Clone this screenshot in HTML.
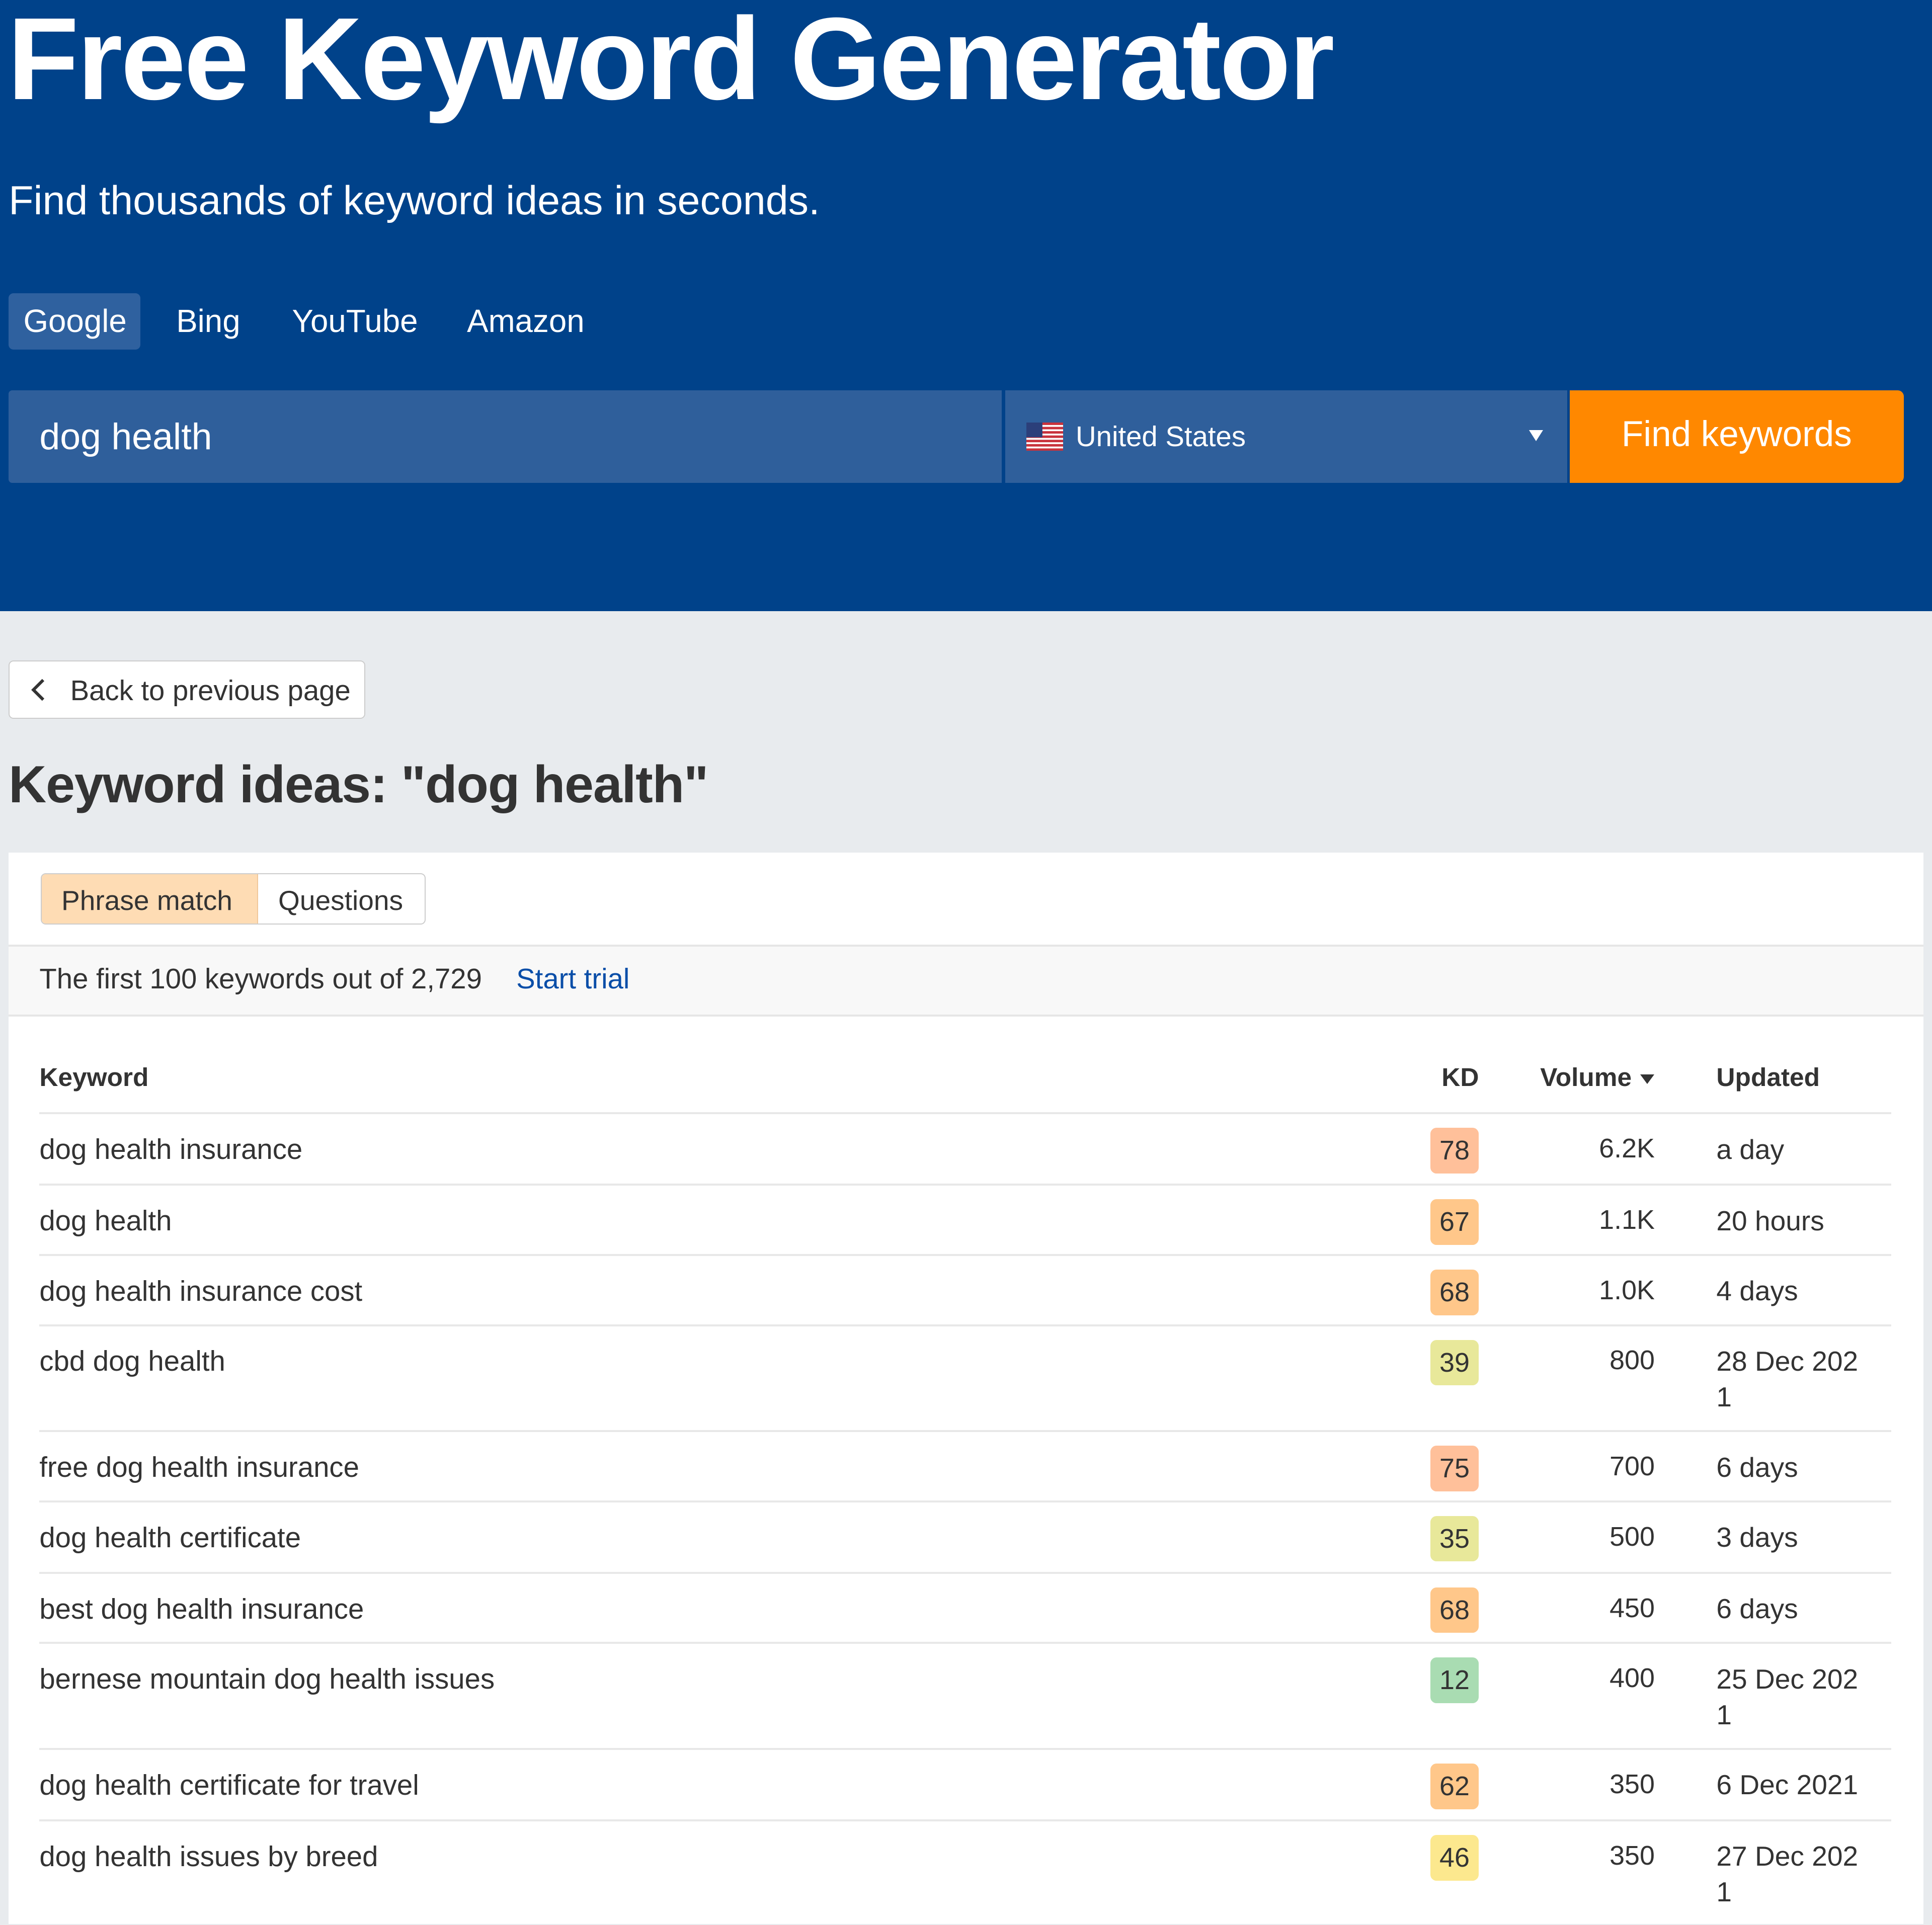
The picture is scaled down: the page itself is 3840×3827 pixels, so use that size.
<!DOCTYPE html>
<html><head><meta charset="utf-8">
<style>
html,body{margin:0;padding:0;}
body{width:3840px;height:3824px;overflow:hidden;background:#e8ebee;}
#z{zoom:2.44898;position:relative;width:1568px;height:1562px;font-family:"Liberation Sans",Arial,sans-serif;color:#333;}
.a{position:absolute;white-space:nowrap;}
#hdr{position:absolute;left:0;top:0;width:1568px;height:496px;background:#00428a;}
.w{color:#fff;}
.tab{font-size:26px;line-height:46px;top:238px;color:#fff;}
.row{position:absolute;left:32px;width:1503px;border-top:2px solid #e8e8e8;font-size:23px;}
.row .k{position:absolute;left:0;top:15px;}
.row .b{position:absolute;left:1129px;top:11px;width:39px;height:37px;border-radius:5px;text-align:center;line-height:37px;font-size:22px;}
.row .v{position:absolute;right:192px;top:15px;font-size:22px;}
.row .u{position:absolute;left:1361px;top:14px;line-height:29px;white-space:normal;width:130px;font-size:22.5px;}
</style></head><body><div id="z">
<div id="hdr"></div>
<div class="a w" style="left:6px;top:-7px;font-size:95px;font-weight:bold;letter-spacing:-1.5px;">Free Keyword Generator</div>
<div class="a w" style="left:7px;top:144px;font-size:33px;">Find thousands of keyword ideas in seconds.</div>
<div class="a" style="left:7px;top:238px;width:107px;height:46px;background:#2f619f;border-radius:4px;"></div>
<div class="a tab" style="left:19px;">Google</div>
<div class="a tab" style="left:143px;">Bing</div>
<div class="a tab" style="left:237px;">YouTube</div>
<div class="a tab" style="left:379px;">Amazon</div>
<div class="a" style="left:7px;top:317px;width:806px;height:75px;background:#2f5f9b;border-radius:3px 0 0 3px;"></div>
<div class="a w" style="left:32px;top:337px;font-size:30px;">dog health</div>
<div class="a" style="left:816px;top:317px;width:456px;height:75px;background:#2f5f9b;"></div>
<svg class="a" style="left:833px;top:343px" width="30" height="23" viewBox="0 0 30 23">
<rect width="30" height="23" fill="#fff"/>
<g fill="#c8323c"><rect y="0" width="30" height="2"/><rect y="3.5" width="30" height="2"/><rect y="7" width="30" height="2"/><rect y="10.5" width="30" height="2"/><rect y="14" width="30" height="2"/><rect y="17.5" width="30" height="2"/><rect y="21" width="30" height="2"/></g>
<rect width="13" height="12" fill="#2b3f7a"/></svg>
<div class="a w" style="left:873px;top:341px;font-size:23px;">United States</div>
<div class="a" style="left:1241px;top:349px;width:0;height:0;border-left:6px solid transparent;border-right:6px solid transparent;border-top:9px solid #fff;"></div>
<div class="a" style="left:1274px;top:317px;width:271px;height:75px;background:#ff8800;border-radius:0 5px 5px 0;"></div>
<div class="a w" style="left:1274px;top:336px;width:271px;text-align:center;font-size:29px;">Find keywords</div>

<div class="a" style="left:7px;top:536px;width:288px;height:46px;background:#fff;border:1px solid #ccc;border-radius:4px;"></div>
<svg class="a" style="left:24px;top:550px" width="14" height="20" viewBox="0 0 14 20"><path d="M11 2 L3 10 L11 18" stroke="#333" stroke-width="2.5" fill="none"/></svg>
<div class="a" style="left:57px;top:547px;font-size:23px;">Back to previous page</div>
<div class="a" style="left:7px;top:613px;font-size:42.5px;font-weight:bold;letter-spacing:-0.5px;">Keyword ideas: "dog health"</div>

<div class="a" style="left:7px;top:692px;width:1554px;height:870px;background:#fff;"></div>
<div class="a" style="left:33px;top:709px;width:311px;height:40px;border:1px solid #ccc;border-radius:4px;background:#fff;overflow:hidden;">
<div class="a" style="left:0;top:0;width:175px;height:40px;background:#fedcb4;border-right:1px solid #f0c89a;"></div>
<div class="a" style="left:16px;top:8px;font-size:22.5px;">Phrase match</div>
<div class="a" style="left:192px;top:8px;font-size:22.5px;">Questions</div></div>
<div class="a" style="left:7px;top:767px;width:1554px;height:55px;background:#f8f8f8;border-top:2px solid #e6e6e6;border-bottom:2px solid #e6e6e6;"></div>
<div class="a" style="left:32px;top:781px;font-size:23px;">The first 100 keywords out of 2,729</div>
<div class="a" style="left:419px;top:781px;font-size:23px;color:#0a4ea8;">Start trial</div>

<div class="a" style="left:32px;top:862px;font-size:21px;font-weight:bold;">Keyword</div>
<div class="a" style="left:1170px;top:862px;font-size:21px;font-weight:bold;">KD</div>
<div class="a" style="left:1250px;top:862px;font-size:21px;font-weight:bold;">Volume</div>
<div class="a" style="left:1331px;top:872px;width:0;height:0;border-left:6px solid transparent;border-right:6px solid transparent;border-top:8px solid #333;"></div>
<div class="a" style="left:1393px;top:862px;font-size:21px;font-weight:bold;">Updated</div>

<div class="row" style="top:903px;height:56px"><span class="k">dog health insurance</span><span class="b" style="background:#ffc09a">78</span><span class="v">6.2K</span><span class="u">a day</span></div>
<div class="row" style="top:961px;height:55px"><span class="k">dog health</span><span class="b" style="background:#ffc78a">67</span><span class="v">1.1K</span><span class="u">20 hours</span></div>
<div class="row" style="top:1018px;height:55px"><span class="k">dog health insurance cost</span><span class="b" style="background:#ffc78a">68</span><span class="v">1.0K</span><span class="u">4 days</span></div>
<div class="row" style="top:1075px;height:84px"><span class="k">cbd dog health</span><span class="b" style="background:#e8e89a">39</span><span class="v">800</span><span class="u">28 Dec 202<br>1</span></div>
<div class="row" style="top:1161px;height:55px"><span class="k">free dog health insurance</span><span class="b" style="background:#ffc09a">75</span><span class="v">700</span><span class="u">6 days</span></div>
<div class="row" style="top:1218px;height:56px"><span class="k">dog health certificate</span><span class="b" style="background:#e8e89a">35</span><span class="v">500</span><span class="u">3 days</span></div>
<div class="row" style="top:1276px;height:55px"><span class="k">best dog health insurance</span><span class="b" style="background:#ffc78a">68</span><span class="v">450</span><span class="u">6 days</span></div>
<div class="row" style="top:1333px;height:84px"><span class="k">bernese mountain dog health issues</span><span class="b" style="background:#a9dcb2">12</span><span class="v">400</span><span class="u">25 Dec 202<br>1</span></div>
<div class="row" style="top:1419px;height:56px"><span class="k">dog health certificate for travel</span><span class="b" style="background:#ffc78a">62</span><span class="v">350</span><span class="u">6 Dec 2021</span></div>
<div class="row" style="top:1477px;height:84px"><span class="k">dog health issues by breed</span><span class="b" style="background:#fce88e">46</span><span class="v">350</span><span class="u">27 Dec 202<br>1</span></div>
</div></body></html>
